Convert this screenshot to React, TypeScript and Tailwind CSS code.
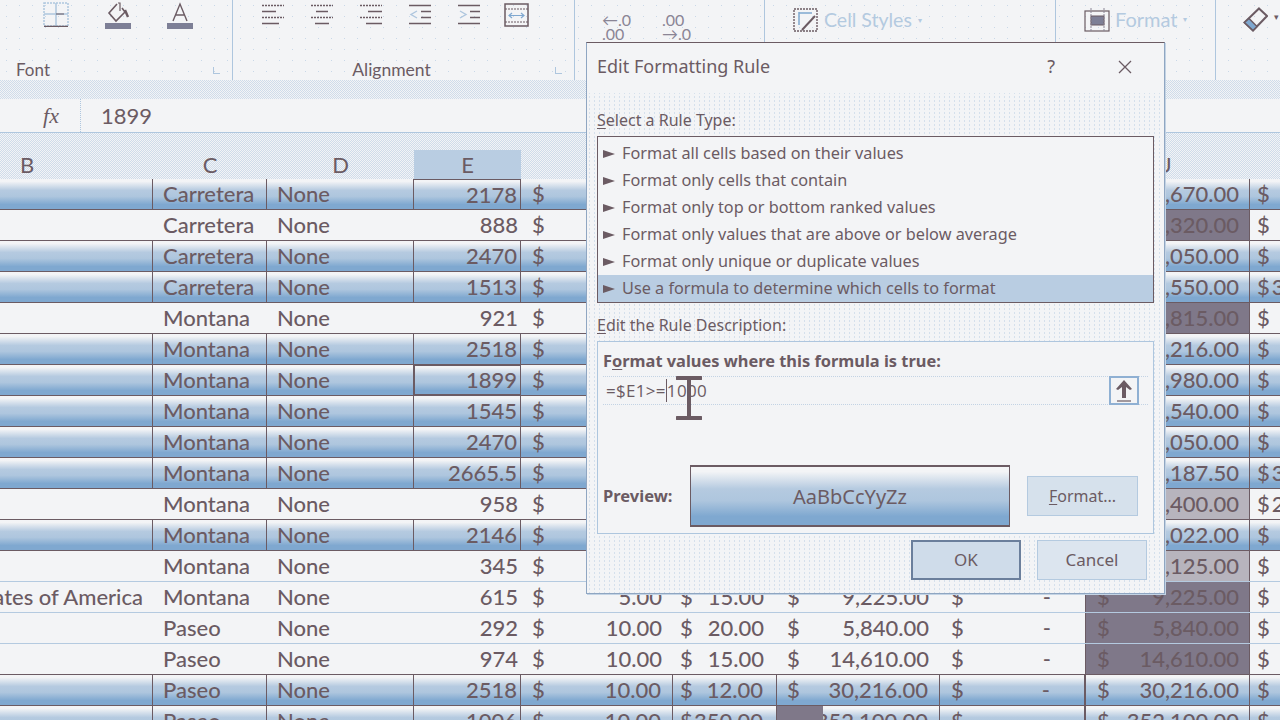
const ink = "#6b5b63";
const cell = "flex items-center";

type Row = {
  hi?: boolean;
  b?: string;
  c: string;
  e: string;
  j: string;
  shade?: "dark" | "speck";
  k?: string;
  f?: string;
  g?: string;
  h?: string;
};

const rows: Row[] = [
  { hi: true, c: "Carretera", e: "2178", j: "32,670.00" },
  { c: "Carretera", e: "888", j: "13,320.00", shade: "dark" },
  { hi: true, c: "Carretera", e: "2470", j: "37,050.00" },
  { hi: true, c: "Carretera", e: "1513", j: "529,550.00", k: "3" },
  { c: "Montana", e: "921", j: "13,815.00", shade: "dark" },
  { hi: true, c: "Montana", e: "2518", j: "30,216.00" },
  { hi: true, c: "Montana", e: "1899", j: "37,980.00" },
  { hi: true, c: "Montana", e: "1545", j: "18,540.00" },
  { hi: true, c: "Montana", e: "2470", j: "37,050.00" },
  { hi: true, c: "Montana", e: "2665.5", j: "333,187.50", k: "3" },
  { c: "Montana", e: "958", j: "287,400.00", shade: "speck", k: "2" },
  { hi: true, c: "Montana", e: "2146", j: "15,022.00" },
  { c: "Montana", e: "345", j: "43,125.00", shade: "speck" },
  { b: "ates of America", c: "Montana", e: "615", f: "5.00", g: "15.00", h: "9,225.00", j: "9,225.00", shade: "dark" },
  { c: "Paseo", e: "292", f: "10.00", g: "20.00", h: "5,840.00", j: "5,840.00", shade: "dark" },
  { c: "Paseo", e: "974", f: "10.00", g: "15.00", h: "14,610.00", j: "14,610.00", shade: "dark" },
  { hi: true, c: "Paseo", e: "2518", f: "10.00", g: "12.00", h: "30,216.00", j: "30,216.00" },
  { hi: true, c: "Paseo", e: "1006", f: "10.00", g: "350.00", h: "352,100.00", j: "352,100.00" },
];

const ruleTypes = [
  "Format all cells based on their values",
  "Format only cells that contain",
  "Format only top or bottom ranked values",
  "Format only values that are above or below average",
  "Format only unique or duplicate values",
  "Use a formula to determine which cells to format",
];

const AlignIcon = ({ lines }: { lines: [number, number][] }) => (
  <svg width="24" height="22" viewBox="0 0 24 22" fill="none">
    {lines.map(([x1, x2], i) => (
      <line key={i} x1={x1} x2={x2} y1={2.5 + i * 6} y2={2.5 + i * 6} stroke={ink} strokeWidth="1.5" strokeDasharray={i % 2 ? "none" : "2 1"} />
    ))}
  </svg>
);

const Ribbon = () => (
  <div className="flex h-[80px] bg-[radial-gradient(#c9d8e8_0.6px,transparent_1px)] bg-[length:13px_11px] text-[#6b5b63]">
    <div className="flex h-full w-[233px] flex-col border-r border-[#aec6de]">
      <div className="flex h-[60px] items-start pt-[2px] pl-[43px]">
        <svg width="26" height="25" viewBox="0 0 26 25" fill="none">
          <rect x="1" y="1" width="24" height="23" stroke="#aec6de" strokeWidth="1.5" strokeDasharray="2 1" />
          <path d="M13 1v23M1 12h24" stroke="#aec6de" strokeWidth="1.5" />
          <path d="M13 12h8" stroke={ink} strokeWidth="1" />
          <path d="M1 24.5h24" stroke={ink} strokeWidth="1.5" />
        </svg>
        <svg className="ml-[36px]" width="26" height="27" viewBox="0 0 26 27" fill="none">
          <path d="M12 2 4 11l7 8 9-9-3-4" stroke={ink} strokeWidth="1.6" />
          <path d="M13 1h2v8" stroke={ink} strokeWidth="1.2" />
          <path d="M20 8l3 7" stroke={ink} strokeWidth="2.4" />
          <rect x="0" y="21" width="26" height="6" fill="#7d7f96" />
        </svg>
        <svg className="ml-[36px]" width="26" height="27" viewBox="0 0 26 27" fill="none">
          <path d="M6 19 13 2l7 17M8.5 13h9" stroke={ink} strokeWidth="1.4" />
          <rect x="0" y="21" width="26" height="6" fill="#7d7f96" />
        </svg>
      </div>
      <div className="flex items-center justify-between pr-[12px] pl-[16px]">
        <span className="text-[17px] leading-5">Font</span>
        <span className="h-[7px] w-[7px] border-b border-l border-[#aec6de]" />
      </div>
    </div>
    <div className="flex h-full w-[342px] flex-col border-r border-[#aec6de]">
      <div className="flex h-[60px] items-start gap-[25px] pt-[3px] pl-[28px]">
        <AlignIcon lines={[[1, 23], [1, 15], [1, 23], [1, 18]]} />
        <AlignIcon lines={[[1, 23], [6, 18], [1, 23], [5, 19]]} />
        <AlignIcon lines={[[1, 23], [9, 23], [1, 23], [7, 23]]} />
        <svg width="24" height="22" viewBox="0 0 24 22" fill="none">
          <path d="M1 2.5h22M13 8.500h10M13 14.500h10M1 20.500h22" stroke={ink} strokeWidth="1.4" />
          <path d="M9 8 3 11.500 9 15" stroke="#aec6de" strokeWidth="1.4" />
        </svg>
        <svg width="24" height="22" viewBox="0 0 24 22" fill="none">
          <path d="M1 2.500h22M13 8.500h10M13 14.500h10M1 20.500h22" stroke={ink} strokeWidth="1.4" />
          <path d="M3 8l6 3.500L3 15" stroke="#aec6de" strokeWidth="1.4" />
        </svg>
        <svg className="-ml-[2px]" width="25" height="24" viewBox="0 0 25 24" fill="none">
          <rect x="1" y="1" width="23" height="22" stroke={ink} strokeWidth="1.5" />
          <path d="M1 6h23M1 19h23" stroke={ink} strokeWidth="1" strokeDasharray="2 1" />
          <path d="M5 12.500h15M8 10l-3 2.500L8 15M17 10l3 2.500-3 2.500" stroke="#7fa8d0" strokeWidth="1.2" />
        </svg>
      </div>
      <div className="relative flex items-center justify-center pr-[24px]">
        <span className="text-[17.5px] leading-5">Alignment</span>
        <span className="absolute right-[12px] h-[7px] w-[7px] border-b border-l border-[#aec6de]" />
      </div>
    </div>
    <div className="flex h-full w-[190px] gap-[31px] border-r border-[#aec6de] pt-[13px] pl-[27px] text-[16px] leading-[14px] text-[#8a8595]">
      <div className="flex flex-col">
        <span>←.0</span>
        <span>.00</span>
      </div>
      <div className="flex flex-col">
        <span>.00</span>
        <span>→.0</span>
      </div>
    </div>
    <div className="flex h-full w-[291px] items-start gap-[6px] border-r border-[#aec6de] pt-[8px] pl-[28px]">
      <svg width="25" height="24" viewBox="0 0 25 24" fill="none">
        <rect x="1" y="1" width="23" height="22" stroke={ink} strokeWidth="1.4" strokeDasharray="2 1" />
        <path d="M6 4v13M6 5h13" stroke="#7fa8d0" strokeWidth="1.5" />
        <path d="M9 22 22 8" stroke={ink} strokeWidth="2" />
      </svg>
      <span className="text-[19.500px] leading-6 text-[#b4cae0]">Cell Styles</span>
      <span className="mt-[8px] text-[8px] leading-2 text-[#b4cae0]">▾</span>
    </div>
    <div className="flex h-full w-[160px] items-start gap-[5px] border-r border-[#aec6de] pt-[7px] pl-[28px]">
      <svg width="26" height="25" viewBox="0 0 26 25" fill="none">
        <rect x="1" y="4" width="24" height="20" stroke={ink} strokeWidth="1.2" />
        <rect x="7" y="9" width="13" height="9" fill="#7d7f96" stroke={ink} />
        <path d="M7 1v23M20 1v23" stroke="#8a8595" strokeWidth="1" strokeDasharray="2 1" />
      </svg>
      <span className="text-[20px] leading-6 text-[#b4cae0]">Format</span>
      <span className="mt-[8px] text-[8px] leading-2 text-[#b4cae0]">▾</span>
    </div>
    <div className="flex h-full flex-1 items-start gap-[6px] pt-[7px] pl-[27px]">
      <svg width="25" height="25" viewBox="0 0 25 25" fill="none">
        <path d="M16 1.500 24 9 10 23.500 1.500 15.500Z" stroke={ink} strokeWidth="2" />
        <path d="M6 11.500 14 19.500 10 23.500 1.500 15.500Z" fill="#7fa8d0" stroke={ink} strokeWidth="1.500" />
      </svg>
      <span className="mt-[6px] text-[9px] leading-2">▾</span>
    </div>
  </div>
);

const FormulaBar = () => (
  <div className="flex h-[34px] border-b border-[#aec6de] text-[#6b5b63]">
    <div className="flex w-[81px] items-center justify-end border-r border-dotted border-[#aec6de] pr-[21px]">
      <span className="font-['Liberation_Serif',serif] text-[22px] italic">fx</span>
    </div>
    <div className="flex flex-1 items-center pl-[20px] text-[22px]">1899</div>
  </div>
);

const SheetHeader = () => (
  <div className="grid h-[46px] grid-cols-[153px_114px_147px_107px_152px_104px_163px_145px_165px_30px] items-end bg-[repeating-conic-gradient(#f3f4f6_0_25%,#cfdcea_0_50%)] bg-[length:2px_2px] text-[22px] leading-[29px] text-[#6b5b63]">
    <div className="h-[29px] pl-[20px]">B</div>
    <div className="h-[29px] text-center">C</div>
    <div className="h-[29px] text-center">D</div>
    <div className="h-[29px] bg-[#b9cde2] text-center">E</div>
    <div className="h-[29px]" />
    <div className="h-[29px]" />
    <div className="h-[29px]" />
    <div className="h-[29px]" />
    <div className="h-[29px] pr-[8px] text-center">U</div>
    <div className="h-[29px]" />
  </div>
);

const SheetRow = ({ row, index }: { row: Row; index: number }) => {
  const next = rows[index + 1];
  const rule = row.hi || next?.hi ? "border-[#6b5b63]" : "border-[#b4cae0]";
  const divider = row.hi ? "border-r border-[#6b5b63]" : "";
  const selected = index === 6;
  const shade = row.shade === "dark" ? "bg-[#7f7889]" : row.shade === "speck" ? "bg-[#b7b4bd]" : "";
  return (
    <div
      className={`grid h-[31px] grid-cols-[153px_114px_147px_107px_152px_104px_163px_145px_165px_30px] grid-rows-[30px] items-stretch overflow-hidden border-b ${rule} ${row.hi ? "bg-[linear-gradient(#f3f4f6_8%,#b5cae0_38%,#aec6de_58%,#7fa8d0_85%)]" : ""}`}
    >
      <div className={`${cell} justify-end overflow-hidden pr-[10px] whitespace-nowrap ${divider}`}>{row.b}</div>
      <div className={`${cell} pl-[10px] ${divider}`}>{row.c}</div>
      <div className={`${cell} pl-[10px] ${divider}`}>None</div>
      <div className={`${cell} justify-end pr-[3px] ${divider} ${selected ? "border-y border-l border-[#6b5b63]" : ""} ${index === 0 ? "border-t border-[#6b5b63]" : ""}`}>{row.e}</div>
      <div className={`${cell} justify-between pr-[11px] pl-[11px] ${divider}`}>
        <span>$</span>
        <span>{row.f}</span>
      </div>
      <div className={`${cell} justify-between pr-[13px] pl-[7px] ${divider}`}>
        <span>$</span>
        <span>{row.g}</span>
      </div>
      <div className={`${cell} relative justify-between pr-[11px] pl-[10px] ${divider}`}>
        <span>$</span>
        <span>{row.h}</span>
        {index === 17 && <span className="absolute top-0 left-0 h-[14px] w-[46px] bg-[#7f7889]" />}
      </div>
      <div className={`${cell} justify-between pr-[34px] pl-[11px] ${divider}`}>
        <span>$</span>
        <span>-</span>
      </div>
      <div className={`${cell} justify-between border-r border-l border-[#6b5b63] pr-[10px] pl-[11px] ${shade}`}>
        <span>$</span>
        <span>{row.j}</span>
      </div>
      <div className={`${cell} gap-[2px] pl-[7px]`}>
        <span>$</span>
        <span>{row.k}</span>
      </div>
    </div>
  );
};

const Dialog = () => (
  <div className="absolute top-[42px] left-[586px] flex h-[552px] w-[579px] flex-col border border-[#8fa6c2] border-t-[#6b5b63] bg-[#f3f4f6] bg-[radial-gradient(#d5e0ec_0.7px,transparent_1px)] bg-[length:5px_4px] px-[10px] font-['Noto_Sans',sans-serif] text-[#6b5b63] shadow-[1px_1px_0_#c3d3e4]">
    <div className="-mx-[10px] flex h-[50px] items-center justify-between bg-[#f3f4f6] pr-[10px] pb-[3px] pl-[10px]">
      <span className="text-[18px]">Edit Formatting Rule</span>
      <div className="flex items-center gap-[62px] pr-[21px]">
        <span className="text-[18px]">?</span>
        <svg width="16" height="16" viewBox="0 0 16 16" fill="none">
          <path d="M2 2l12 12M14 2 2 14" stroke={ink} strokeWidth="1.300" />
        </svg>
      </div>
    </div>
    <div className="mt-[15px] h-[28px] text-[16px] leading-6">
      <span className="underline underline-offset-2">S</span>elect a Rule Type:
    </div>
    <div className="flex h-[167px] w-[557px] flex-col border border-[#6b5b63] bg-[#f3f4f6] pt-[3px]">
      {ruleTypes.map((rule, i) => (
        <div key={rule} className={`flex h-[27px] shrink-0 items-center gap-[7px] pl-[5px] text-[16.250px] ${i === 5 ? "bg-[#b9cde2]" : ""}`}>
          <svg width="12" height="8" viewBox="0 0 12 8">
            <path d="M0 0l12 4-12 4z" fill={ink} />
          </svg>
          {rule}
        </div>
      ))}
    </div>
    <div className="mt-[10px] h-[28px] text-[16px] leading-6">
      <span className="underline underline-offset-2">E</span>dit the Rule Description:
    </div>
    <div className="relative flex h-[193px] w-[557px] flex-col border border-[#aec6de] bg-[#f3f4f6] px-[5px]">
      <div className="mt-[7px] h-[27px] text-[16.400px] leading-6 font-bold">
        F<span className="underline underline-offset-2">o</span>rmat values where this formula is true:
      </div>
      <div className="flex h-[29px] items-center justify-between border-y border-dotted border-[#c3d3e4] pl-[3px]">
        <span className="font-['Open_Sans',sans-serif] text-[17px] tracking-[0.3px]">
          =$E1&gt;=<span className="border-l border-[#6b5b63]">1000</span>
        </span>
        <span className="mr-[9px] flex h-[29px] w-[30px] items-center justify-center border-2 border-[#8fb0d3] bg-[#f3f4f6]">
          <svg width="20" height="24" viewBox="0 0 20 24" fill="none">
            <path d="M10 1 2 10l2 1 4-3v11h4V8l4 3 2-1z" fill={ink} />
            <path d="M3 22h14" stroke={ink} strokeWidth="1.200" />
          </svg>
        </span>
      </div>
      <svg className="absolute top-[34px] left-[78px]" width="26" height="44" viewBox="0 0 26 44" fill="none">
        <path d="M1 2h24M1 42h24" stroke={ink} strokeWidth="4" strokeLinecap="round" />
        <path d="M13 2v40" stroke={ink} strokeWidth="4" />
      </svg>
      <div className="mt-[60px] flex items-center">
        <span className="w-[87px] pt-[1px] text-[16.500px] font-bold">Preview:</span>
        <div className="flex h-[62px] w-[320px] items-center justify-center border-x border-y-2 border-[#6b5b63] bg-[linear-gradient(#f3f4f6_8%,#b5cae0_38%,#aec6de_58%,#7fa8d0_85%)] pt-[1px] text-[20px]">
          AaBbCcYyZz
        </div>
        <div className="ml-[17px] flex h-[40px] w-[111px] items-center justify-center border border-[#b4cae0] bg-[#d6e1ec] text-[16px]">
          <span className="underline underline-offset-2">F</span>ormat...
        </div>
      </div>
    </div>
    <div className="mt-[6px] flex gap-[16px] pl-[314px] text-[17px]">
      <div className="flex h-[40px] w-[110px] items-center justify-center border-2 border-[#6b7f9c] bg-[#cfdcea]">OK</div>
      <div className="flex h-[40px] w-[110px] items-center justify-center border border-[#b4cae0] bg-[#dce5ef]">Cancel</div>
    </div>
  </div>
);

export default function App() {
  return (
    <div className="relative h-[720px] w-[1280px] overflow-hidden bg-[#f3f4f6] font-['Lato',sans-serif]">
      <Ribbon />
      <div className="h-[19px] bg-[repeating-conic-gradient(#f3f4f6_0_25%,#cfdcea_0_50%)] bg-[length:2px_2px]" />
      <FormulaBar />
      <SheetHeader />
      <div className="text-[22px] leading-[30px] font-medium text-[#6b5b63]">
        {rows.map((row, i) => (
          <SheetRow key={i} row={row} index={i} />
        ))}
      </div>
      <Dialog />
    </div>
  );
}
